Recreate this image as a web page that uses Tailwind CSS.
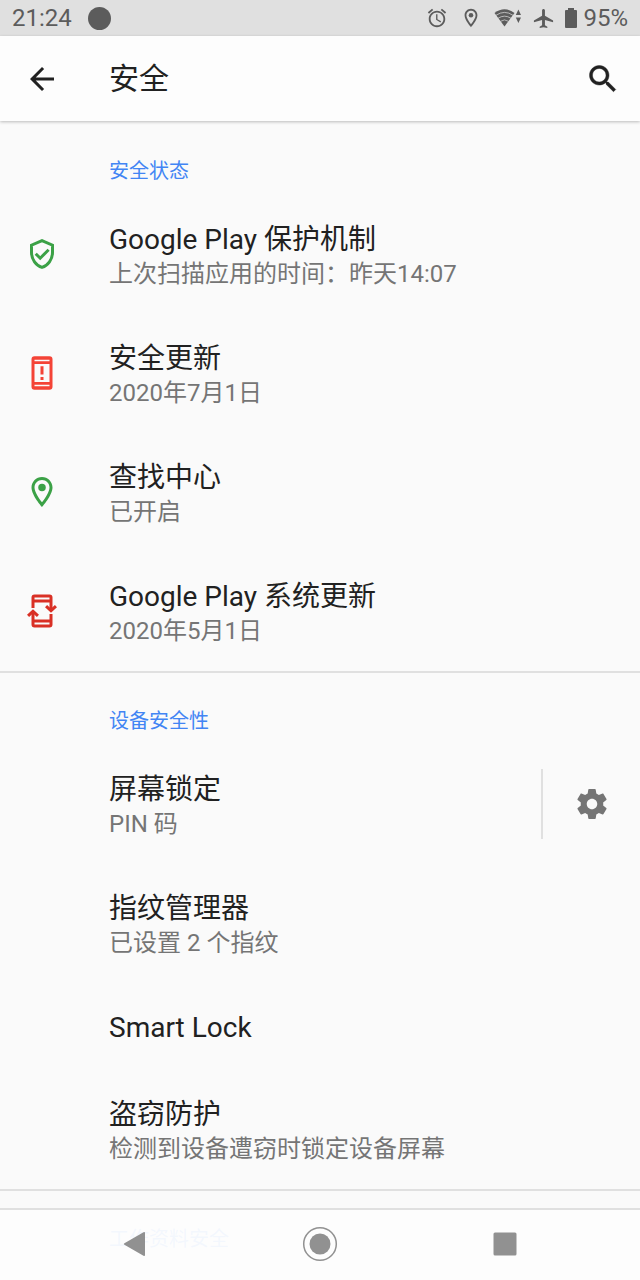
<!DOCTYPE html>
<html lang="zh-CN">

<head>
  <meta charset="UTF-8">
  <meta name="viewport" content="width=device-width, initial-scale=1.0">
  <title>安全</title>
  <script src="https://cdn.jsdelivr.net/npm/@tailwindcss/browser@4"></script>
</head>

<body class="relative flex h-screen flex-col overflow-hidden bg-[#fafafa] font-[Roboto,'Noto_Sans_CJK_SC',sans-serif] text-[#212121]">
  <!-- 状态栏 -->
  <div class="flex h-9 shrink-0 items-center justify-between bg-[#e0e0e0] px-3 text-[24px] text-[#5c5c5c]">
    <div class="flex items-center gap-4">
      <span>21:24</span>
      <span class="size-[23px] rounded-full bg-[#5c5c5c]"></span>
    </div>
    <div class="flex items-center">
      <svg class="mr-3 size-[22px]" viewBox="0 0 24 24" fill="currentColor"><path d="M22 5.72l-4.6-3.86-1.29 1.53 4.6 3.86L22 5.72zM7.88 3.39L6.6 1.86 2 5.71l1.29 1.53 4.59-3.85zM12.5 8H11v6l4.75 2.85.75-1.23-4-2.37V8zM12 4c-4.97 0-9 4.03-9 9s4.02 9 9 9c4.97 0 9-4.03 9-9s-4.03-9-9-9zm0 16c-3.87 0-7-3.13-7-7s3.13-7 7-7 7 3.13 7 7-3.13 7-7 7z"/></svg>
      <svg class="mr-3 size-[22px]" viewBox="0 0 24 24" fill="currentColor"><path d="M12 2C8.13 2 5 5.13 5 9c0 5.25 7 13 7 13s7-7.75 7-13c0-3.87-3.13-7-7-7zM7 9c0-2.76 2.24-5 5-5s5 2.24 5 5c0 2.88-2.88 7.19-5 9.88C9.92 16.21 7 11.85 7 9z"/><circle cx="12" cy="9" r="2.5"/></svg>
      <svg class="mr-2.5 h-[22px] w-7" viewBox="0 0 28 22">
        <path d="M.5 6Q10.500 -1.500 20.500 6L10.500 19.500Z" fill="currentColor"/>
        <path d="M2 8.300Q10.500 2.500 19 8.300M4 11.300Q10.500 7 17 11.300M6.500 14.300Q10.500 11.500 14.500 14.300" fill="none" stroke="#e0e0e0" stroke-width=".7"/>
        <path d="M21.800 8L24.400 2.500L27 8ZM21.800 10.500L24.400 16L27 10.500Z" fill="currentColor"/>
      </svg>
      <svg class="mr-2 size-[23px]" viewBox="0 0 24 24" fill="currentColor"><path d="M22 16v-2l-8.500-5V3.500c0-.83-.67-1.500-1.500-1.500s-1.500.67-1.500 1.500V9L2 14v2l8.500-2.500V19L8 20.500V22l4-1 4 1v-1.500L13.500 19v-5.500L22 16z"/></svg>
      <svg class="mr-1 h-5 w-4" viewBox="0 0 16 20" fill="currentColor"><path d="M5 0h6v2h2q1 0 1 1v16q0 1-1 1H3q-1 0-1-1V3q0-1 1-1h2z"/></svg>
      <span>95%</span>
    </div>
  </div>

  <!-- 标题栏 -->
  <header class="z-10 flex h-[85px] shrink-0 items-center bg-[#fdfdfd] pr-[19px] shadow-[0_1px_3px_rgba(0,0,0,0.25)]">
    <div class="w-[109px] shrink-0 pl-6">
      <button class="block" aria-label="返回">
        <svg class="size-9" viewBox="0 0 24 24" fill="currentColor"><path d="M20 11H7.830l5.590-5.590L12 4l-8 8 8 8 1.410-1.410L7.830 13H20v-2z"/></svg>
      </button>
    </div>
    <h1 class="flex-1 text-[30px]">安全</h1>
    <button class="block" aria-label="搜索">
      <svg class="size-9" viewBox="0 0 24 24" fill="currentColor" stroke="currentColor" stroke-width=".3"><path d="M15.500 14h-.79l-.28-.27C15.410 12.590 16 11.110 16 9.500 16 5.910 13.090 3 9.500 3S3 5.910 3 9.500 5.910 16 9.500 16c1.610 0 3.090-.59 4.230-1.570l.27.28v.79l5 4.990L20.490 19l-4.990-5zm-6 0C7.010 14 5 11.990 5 9.500S7.010 5 9.500 5 14 7.010 14 9.500 11.990 14 9.500 14z"/></svg>
    </button>
  </header>

  <main class="min-h-0 flex-1 overflow-hidden pt-0.5">
    <!-- 安全状态 -->
    <section class="border-b-2 border-[#e0e0e0]">
      <h2 class="h-[72px] pt-8 pl-[109px] text-[20px] leading-8 text-[#4285f4]">安全状态</h2>
      <a href="#" class="flex items-center pt-[23px] pb-6">
        <div class="w-[109px] shrink-0 pl-6">
          <svg class="size-9 text-[#3ba146]" viewBox="0 0 24 24" fill="none" stroke="currentColor" stroke-width="2"><path d="M12 3.100L5 6.100V11c0 4.500 3 8.700 7 9.900 4-1.200 7-5.400 7-9.900V6.100z"/><path d="M7.800 11.800l3 3 5.600-5.600"/></svg>
        </div>
        <div class="pt-1">
          <h3 class="text-[28px] leading-9">Google Play 保护机制</h3>
          <p class="text-[24px] leading-8 text-[#757575]">上次扫描应用的时间：昨天14:07</p>
        </div>
      </a>
      <a href="#" class="flex items-center pt-[23px] pb-6">
        <div class="w-[109px] shrink-0 pl-6">
          <svg class="size-9 text-[#f44336]" viewBox="0 0 24 24" fill="currentColor"><path fill-rule="evenodd" d="M7 .800h10a2 2 0 0 1 2 2v18.400a2 2 0 0 1-2 2H7a2 2 0 0 1-2-2V2.800a2 2 0 0 1 2-2zM7 3.200v.9h10V3.200zM7 6v12h10V6zM7 19.900v.9h10V19.900z"/><path d="M11 7.500h2v5.500h-2zM11 14.700h2v2h-2z"/></svg>
        </div>
        <div class="pt-1">
          <h3 class="text-[28px] leading-9">安全更新</h3>
          <p class="text-[24px] leading-8 text-[#757575]">2020年7月1日</p>
        </div>
      </a>
      <a href="#" class="flex items-center pt-[23px] pb-6">
        <div class="w-[109px] shrink-0 pl-6">
          <svg class="size-9 text-[#3ba146]" viewBox="0 0 24 24" fill="currentColor"><path d="M12 2C8.130 2 5 5.130 5 9c0 5.250 7 13 7 13s7-7.750 7-13c0-3.870-3.130-7-7-7zM7 9c0-2.760 2.240-5 5-5s5 2.240 5 5c0 2.880-2.880 7.190-5 9.880C9.920 16.210 7 11.850 7 9z"/><circle cx="12" cy="9" r="2.500"/></svg>
        </div>
        <div class="pt-1">
          <h3 class="text-[28px] leading-9">查找中心</h3>
          <p class="text-[24px] leading-8 text-[#757575]">已开启</p>
        </div>
      </a>
      <a href="#" class="flex items-center pt-[23px] pb-6">
        <div class="w-[109px] shrink-0 pl-6">
          <svg class="size-9 text-[#d93025]" viewBox="0 0 24 24" fill="none" stroke="currentColor" stroke-width="2"><path d="M6 10V3q0-1 1-1h10q1 0 1 1v8.500M6 5.300h12M18 14v7q0 1-1 1H7q-1 0-1-1v-8.500M6 18.700h12"/><path d="M14.700 8.700L18 11.800l3.300-3.100M2.700 15.300L6 12.200l3.300 3.100"/></svg>
        </div>
        <div class="pt-1">
          <h3 class="text-[28px] leading-9">Google Play 系统更新</h3>
          <p class="text-[24px] leading-8 text-[#757575]">2020年5月1日</p>
        </div>
      </a>
    </section>

    <!-- 设备安全性 -->
    <section class="border-b-2 border-[#e0e0e0]">
      <h2 class="h-[72px] pt-8 pl-[109px] text-[20px] leading-8 text-[#4285f4]">设备安全性</h2>
      <div class="flex items-center pt-[23px] pb-6 pl-[109px]">
        <a href="#" class="flex-1 pt-1">
          <h3 class="text-[28px] leading-9">屏幕锁定</h3>
          <p class="text-[24px] leading-8 text-[#757575]">PIN 码</p>
        </a>
        <button class="flex h-[70px] w-[99px] items-center justify-center border-l-2 border-[#e0e0e0] text-[#757575]" aria-label="屏幕锁定设置">
          <svg class="size-9" viewBox="0 0 24 24" fill="currentColor"><path d="M19.430 12.980c.04-.32.070-.64.070-.98s-.03-.66-.07-.98l2.110-1.650c.19-.15.240-.42.120-.64l-2-3.460c-.12-.22-.39-.3-.61-.22l-2.490 1c-.52-.4-1.080-.73-1.690-.98l-.38-2.650C14.460 2.180 14.250 2 14 2h-4c-.25 0-.46.180-.49.420l-.38 2.650c-.61.250-1.170.590-1.690.980l-2.490-1c-.23-.09-.49 0-.61.220l-2 3.460c-.13.220-.07.490.12.640l2.110 1.650c-.04.320-.07.650-.07.980s.03.660.07.980l-2.110 1.650c-.19.150-.24.420-.12.640l2 3.460c.12.220.39.300.61.220l2.490-1c.52.400 1.080.730 1.690.980l.38 2.650c.03.240.24.420.49.420h4c.25 0 .46-.18.49-.42l.38-2.650c.61-.25 1.170-.59 1.690-.98l2.490 1c.23.090.49 0 .61-.22l2-3.460c.12-.22.070-.49-.12-.64l-2.110-1.650zM12 15.500c-1.930 0-3.500-1.570-3.500-3.500s1.570-3.500 3.500-3.500 3.500 1.570 3.500 3.500-1.570 3.500-3.500 3.500z"/></svg>
        </button>
      </div>
      <a href="#" class="block pt-[27px] pb-6 pl-[109px]">
        <h3 class="text-[28px] leading-9">指纹管理器</h3>
        <p class="text-[24px] leading-8 text-[#757575]">已设置 2 个指纹</p>
      </a>
      <a href="#" class="block pt-[27px] pb-6 pl-[109px]">
        <h3 class="text-[28px] leading-9">Smart Lock</h3>
      </a>
      <a href="#" class="block pt-[27px] pb-6 pl-[109px]">
        <h3 class="text-[28px] leading-9">盗窃防护</h3>
        <p class="text-[24px] leading-8 text-[#757575]">检测到设备遭窃时锁定设备屏幕</p>
      </a>
    </section>

    <!-- 工作资料安全 -->
    <section>
      <h2 class="h-[72px] pt-8 pl-[109px] text-[20px] leading-8 text-[#4285f4]">工作资料安全</h2>
    </section>
  </main>

  <!-- 导航栏 -->
  <nav class="absolute inset-x-0 bottom-0 z-20 flex h-[72px] items-center justify-around border-t-2 border-[#e0e0e0] bg-[#fdfdfd]/95 px-[42px] pb-0.5 text-[#919191]">
    <button class="block" aria-label="后退">
      <svg class="size-9" viewBox="0 0 36 36" fill="currentColor"><path d="M7.400 17.200L26.500 6.200Q28 5.500 28 7V29Q28 30.500 26.500 29.800L7.400 18.800Q6 18 7.400 17.200z"/></svg>
    </button>
    <button class="block" aria-label="主屏幕">
      <svg class="size-9" viewBox="0 0 36 36"><circle cx="18" cy="18" r="16.300" fill="none" stroke="currentColor" stroke-width="1.500"/><circle cx="18" cy="18" r="10.500" fill="currentColor"/></svg>
    </button>
    <button class="block" aria-label="最近任务">
      <svg class="size-9" viewBox="0 0 36 36" fill="currentColor"><rect x="6.500" y="6.500" width="23" height="23" rx="1.500"/></svg>
    </button>
  </nav>
</body>

</html>
